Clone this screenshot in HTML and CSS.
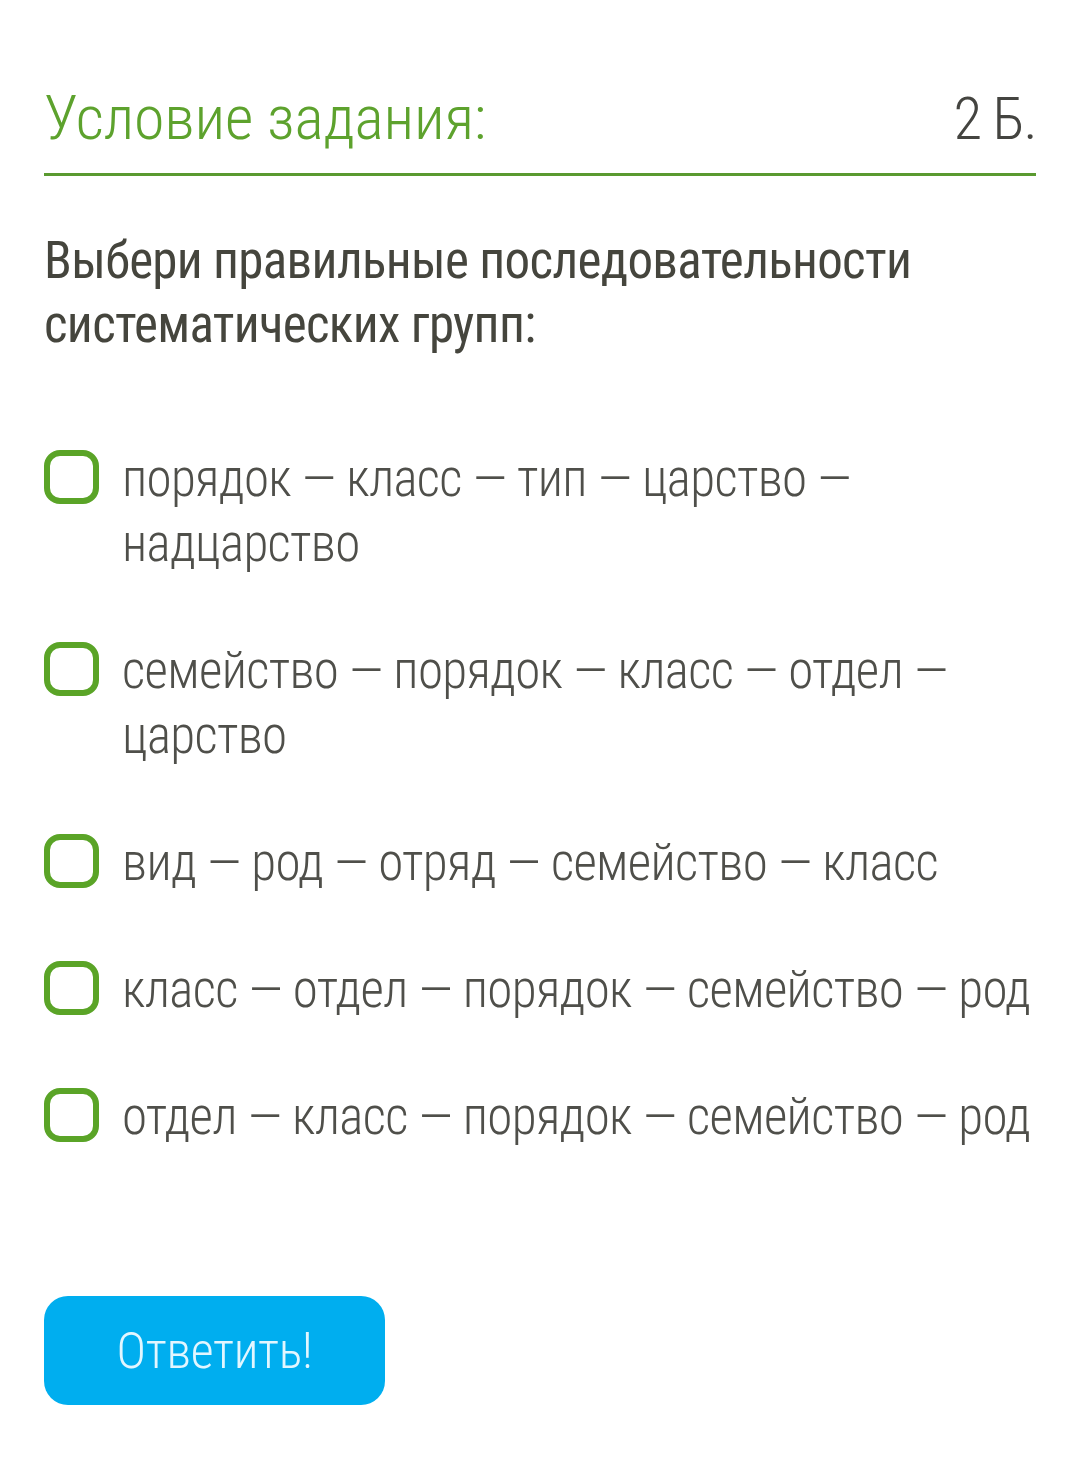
FILE: index.html
```html
<!DOCTYPE html>
<html lang="ru">
<head>
<meta charset="utf-8">
<title>Условие задания</title>
<link rel="stylesheet" href="styles.css">
</head>
<body>
<main class="task">
  <header class="task-head">
    <h1 class="task-title">Условие задания:</h1>
    <span class="task-points">2 Б.</span>
  </header>
  <p class="question">Выбери правильные последовательности систематических групп:</p>
  <ul class="options">
    <li class="option"><span class="box"></span><span class="label">порядок — класс — тип — царство — надцарство</span></li>
    <li class="option"><span class="box"></span><span class="label">семейство — порядок — класс — отдел — царство</span></li>
    <li class="option"><span class="box"></span><span class="label">вид — род — отряд — семейство — класс</span></li>
    <li class="option"><span class="box"></span><span class="label">класс — отдел — порядок — семейство — род</span></li>
    <li class="option"><span class="box"></span><span class="label">отдел — класс — порядок — семейство — род</span></li>
  </ul>
  <button class="submit" type="button">Ответить!</button>
</main>
</body>
</html>
```
FILE: styles.css
```css
html, body {
  margin: 0;
  padding: 0;
  background: #ffffff;
}
body {
  font-family: "Roboto", "Noto Sans", sans-serif;
  font-stretch: 75%;
}
.task {
  padding: 81px 44px 0 44px;
}
.task-head {
  display: flex;
  justify-content: space-between;
  align-items: baseline;
  padding-bottom: 17px;
  border-bottom: 3px solid #5a9a30;
}
.task-title {
  margin: 0;
  font-size: 62px;
  line-height: 74px;
  font-weight: 300;
  letter-spacing: -0.2px;
  color: #5da22d;
}
.task-points {
  font-size: 59px;
  line-height: 74px;
  font-weight: 300;
  letter-spacing: -1.5px;
  color: #444440;
}
.question {
  margin: 53px 0 0 0;
  font-size: 51px;
  line-height: 64px;
  font-weight: 400;
  letter-spacing: -0.7px;
  color: #45453d;
}
.options {
  list-style: none;
  margin: 89px 0 0 0;
  padding: 0;
  display: flex;
  flex-direction: column;
  gap: 62px;
}
.option {
  display: flex;
  align-items: flex-start;
  gap: 23px;
}
.box {
  flex: none;
  width: 43px;
  height: 42px;
  margin-top: 4px;
  border: 6px solid #5aa427;
  border-radius: 16px;
}
.label {
  font-size: 51px;
  line-height: 65px;
  font-weight: 300;
  letter-spacing: -0.65px;
  color: #4f4f4a;
}
.submit {
  display: block;
  margin-top: 147px;
  width: 341px;
  height: 109px;
  border: none;
  border-radius: 24px;
  background: #00aeef;
  color: #e2f6ff;
  font-family: inherit;
  font-stretch: 75%;
  font-size: 50px;
  font-weight: 300;
  letter-spacing: -0.3px;
  padding: 0;
}
```
